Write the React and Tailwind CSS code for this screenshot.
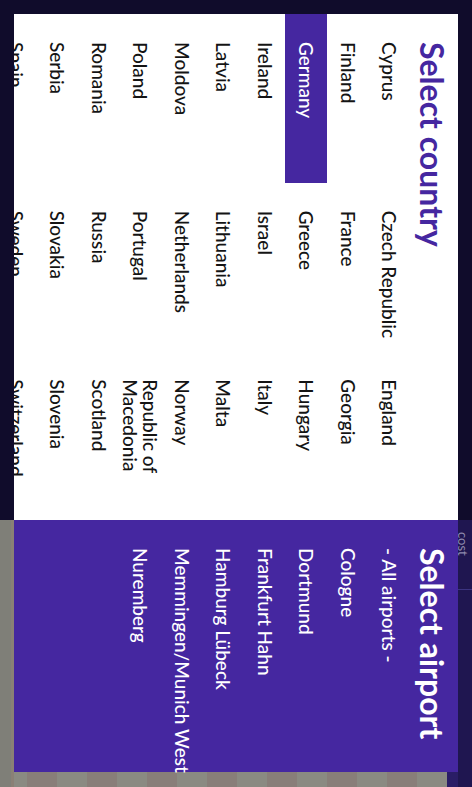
export default function App() {
  const countries = [
    "Cyprus", "Czech Republic", "England",
    "Finland", "France", "Georgia",
    "Germany", "Greece", "Hungary",
    "Ireland", "Israel", "Italy",
    "Latvia", "Lithuania", "Malta",
    "Moldova", "Netherlands", "Norway",
    "Poland", "Portugal", "Republic of Macedonia",
    "Romania", "Russia", "Scotland",
    "Serbia", "Slovakia", "Slovenia",
    "Spain", "Sweden", "Switzerland",
  ];
  const airports = [
    "- All airports -",
    "Cologne",
    "Dortmund",
    "Frankfurt Hahn",
    "Hamburg Lübeck",
    "Memmingen/Munich West",
    "Nuremberg",
  ];
  return (
    <div className="w-[472px] h-[787px] overflow-hidden bg-[#100c2b] font-[family-name:Lato,sans-serif]">
      <div className="w-[787px] h-[472px] origin-top-left translate-x-[472px] rotate-90 flex bg-[#100c2b]">
        {/* Countries */}
        <div className="w-[520px] shrink-0 h-full pl-[14px] py-[14px]">
          <div className="h-full bg-white overflow-hidden">
            <h1 className="h-[48px] pl-[28px] pt-[8px] text-[32px] leading-[36px] font-bold text-[#4527a0] whitespace-nowrap">
              Select country
            </h1>
            <div className="grid grid-cols-3">
              {countries.map((c) => (
                <div
                  key={c}
                  className={
                    c === "Germany"
                      ? "h-[41.5px] flex items-center pl-[28px] pr-[8px] text-[19px] leading-[20px] font-medium bg-[#4527a0] text-white"
                      : "h-[41.5px] flex items-center pl-[28px] pr-[8px] text-[19px] leading-[20px] font-medium text-[#141414]"
                  }
                >
                  {c}
                </div>
              ))}
            </div>
          </div>
        </div>
        {/* Right side */}
        <div className="flex-1 flex flex-col">
          <div className="h-[14px] shrink-0 bg-[#1f1650] flex overflow-hidden">
            <div className="w-[70px] h-full border-r border-[#3b3380] pl-[12px] flex items-end">
              <span className="text-[13px] leading-none text-[#8e8aae] mb-[-2px]">cost</span>
            </div>
          </div>
          <div className="flex-1 flex">
            <div className="w-[252px] shrink-0 bg-[#4527a0] relative">
              <h2 className="h-[48px] pl-[28px] pt-[8px] text-[32px] leading-[36px] font-bold text-white whitespace-nowrap">
                Select airport
              </h2>
              <div className="flex flex-col">
                {airports.map((a) => (
                  <div
                    key={a}
                    className="h-[41.5px] flex items-center pl-[28px] text-[19px] leading-[20px] font-medium text-white whitespace-nowrap"
                  >
                    {a}
                  </div>
                ))}
              </div>
            </div>
            <div className="flex-1 flex flex-col">
              <div className="h-[11px] bg-[#2a1d66]" />
              <div className="flex-1 bg-[repeating-linear-gradient(180deg,#8a8a82_0px,#8a8a82_30px,#887e79_30px,#887e79_60px)]" />
            </div>
          </div>
          <div className="h-[14px] shrink-0 bg-[linear-gradient(180deg,#8a8076_0px,#8a8076_3px,#7f7f78_3px)]" />
        </div>
      </div>
    </div>
  );
}
